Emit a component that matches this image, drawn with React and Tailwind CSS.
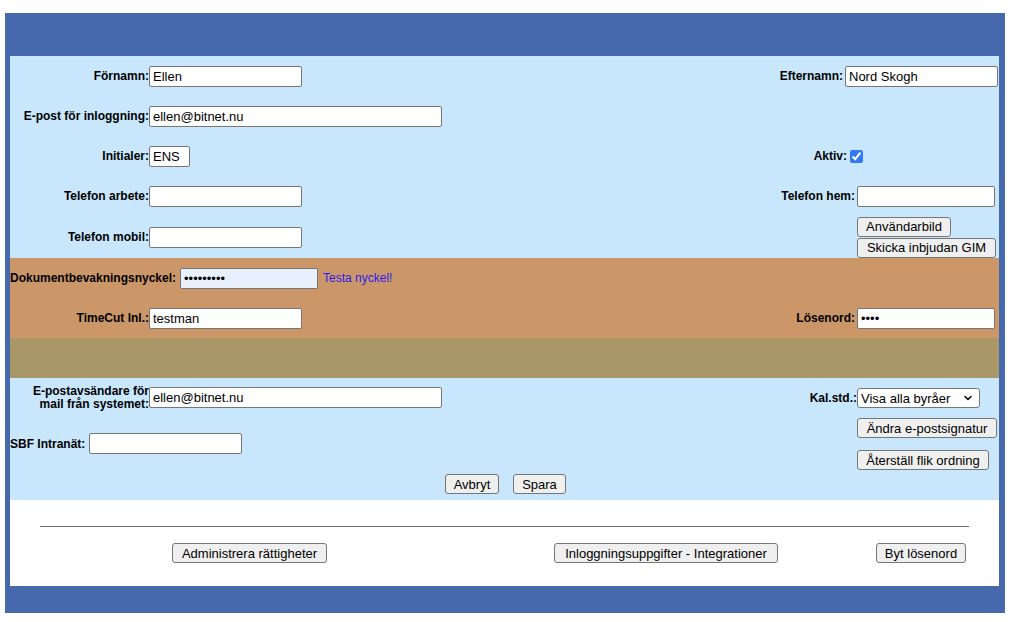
import React from 'react';
import { ChevronDown } from 'lucide-react';

const inputBase =
  'h-[21px] border border-[#767676] rounded-[2px] px-[3px] text-[13px] text-black outline-none';
const inputCls = `${inputBase} bg-white`;
const btnCls =
  'h-[20px] border border-[#767676] rounded-[3px] bg-[#efefef] text-[13px] leading-none text-black text-center';

function Label({ children, className = '' }) {
  return <label className={`text-[12px] font-bold text-black ${className}`}>{children}</label>;
}

function Btn({ children, className = '' }) {
  return <button className={`${btnCls} ${className}`}>{children}</button>;
}

export default function App() {
  return (
    <div className="w-full h-[622px] bg-white pt-[13px] pl-[5px] font-['Liberation_Sans',Arial,sans-serif]">
      <div className="w-[1000px] bg-[#4669ad] pt-[43px] pl-[5px] pr-[6px] pb-[27px]">
        {/* Personuppgifter */}
        <div className="bg-[#c8e7fd]">
          <div className="flex items-center h-[40px]">
            <Label className="w-[139px] text-right">Förnamn:</Label>
            <input className={`${inputCls} w-[153px]`} defaultValue="Ellen" />
            <div className="ml-auto flex items-center mr-[1px]">
              <Label>Efternamn:</Label>
              <input className={`${inputCls} w-[153px] ml-[2px]`} defaultValue="Nord Skogh" />
            </div>
          </div>
          <div className="flex items-center h-[40px]">
            <Label className="w-[139px] text-right">E-post för inloggning:</Label>
            <input className={`${inputCls} w-[293px]`} defaultValue="ellen@bitnet.nu" />
          </div>
          <div className="flex items-center h-[40px]">
            <Label className="w-[139px] text-right">Initialer:</Label>
            <input className={`${inputCls} w-[41px]`} defaultValue="ENS" />
            <div className="ml-auto flex items-center mr-[136px]">
              <Label>Aktiv:</Label>
              <input
                type="checkbox"
                defaultChecked
                className="ml-[3px] w-[13px] h-[13px] accent-[#3478f6]"
              />
            </div>
          </div>
          <div className="flex items-center h-[40px]">
            <Label className="w-[139px] text-right">Telefon arbete:</Label>
            <input className={`${inputCls} w-[153px]`} />
            <div className="ml-auto flex items-center mr-[4px]">
              <Label>Telefon hem:</Label>
              <input className={`${inputCls} w-[138px] ml-[2px]`} />
            </div>
          </div>
          <div className="flex items-center h-[42px]">
            <Label className="w-[139px] text-right">Telefon mobil:</Label>
            <input className={`${inputCls} w-[153px]`} />
            <div className="ml-auto w-[142px] flex flex-col items-start gap-[1px]">
              <Btn className="w-[94px]">Användarbild</Btn>
              <Btn className="w-[139px]">Skicka inbjudan GIM</Btn>
            </div>
          </div>
        </div>

        {/* Integrationer */}
        <div className="bg-[#cb9768]">
          <div className="flex items-center h-[40px]">
            <Label>Dokumentbevakningsnyckel:</Label>
            <input
              type="password"
              className={`${inputBase} w-[138px] ml-[4px] bg-[#e8f0fe]`}
              defaultValue="123456789"
            />
            <a className="ml-[5px] text-[12px] text-[#2b1cf0]">Testa nyckel!</a>
          </div>
          <div className="flex items-center h-[40px]">
            <Label className="w-[139px] text-right">TimeCut Inl.:</Label>
            <input className={`${inputCls} w-[153px]`} defaultValue="testman" />
            <div className="ml-auto flex items-center mr-[4px]">
              <Label>Lösenord:</Label>
              <input type="password" className={`${inputCls} w-[138px] ml-[2px]`} defaultValue="test" />
            </div>
          </div>
        </div>
        <div className="bg-[#aa9767] h-[40px]" />

        {/* Övrigt */}
        <div className="bg-[#c8e7fd] h-[122px] pt-[9px]">
          <div className="flex h-[83px]">
            <div className="flex flex-col">
              <div className="flex items-center h-[21px]">
                <Label className="w-[139px] text-right leading-[13px]">
                  E-postavsändare för
                  <br />
                  mail från systemet:
                </Label>
                <input className={`${inputCls} w-[293px]`} defaultValue="ellen@bitnet.nu" />
              </div>
              <div className="flex items-center h-[21px] mt-[25px]">
                <Label>SBF Intranät:</Label>
                <input className={`${inputCls} w-[153px] ml-[4px]`} />
              </div>
            </div>
            <div className="ml-auto w-[142px] flex flex-col items-start">
              <div className="flex items-center h-[20px] mt-[1px] -ml-[55px]">
                <Label className="w-[55px] text-right">Kal.std.:</Label>
                <div className="relative flex">
                  <select className="block appearance-none w-[123px] h-[20px] border border-[#767676] rounded-[3px] bg-white pl-[3px] text-[13px] text-black">
                    <option>Visa alla byråer</option>
                  </select>
                  <ChevronDown
                    size={12}
                    strokeWidth={3}
                    className="absolute right-[6px] top-[4px] pointer-events-none text-black"
                  />
                </div>
              </div>
              <Btn className="w-[140px] mt-[10px]">Ändra e-postsignatur</Btn>
              <Btn className="w-[132px] mt-[12px]">Återställ flik ordning</Btn>
            </div>
          </div>
          <div className="flex justify-center gap-[14px] mt-[4px] ml-[2px]">
            <Btn className="w-[54px]">Avbryt</Btn>
            <Btn className="w-[53px]">Spara</Btn>
          </div>
        </div>

        {/* Administration */}
        <div className="bg-white h-[86px] pt-[26px]">
          <hr className="mx-[30px] border-0 border-t border-[#6e6e6e]" />
          <div className="flex mt-[16px]">
            <Btn className="w-[155px] ml-[162px]">Administrera rättigheter</Btn>
            <Btn className="w-[224px] ml-[227px]">Inloggningsuppgifter - Integrationer</Btn>
            <Btn className="w-[90px] ml-[98px]">Byt lösenord</Btn>
          </div>
        </div>
      </div>
    </div>
  );
}
